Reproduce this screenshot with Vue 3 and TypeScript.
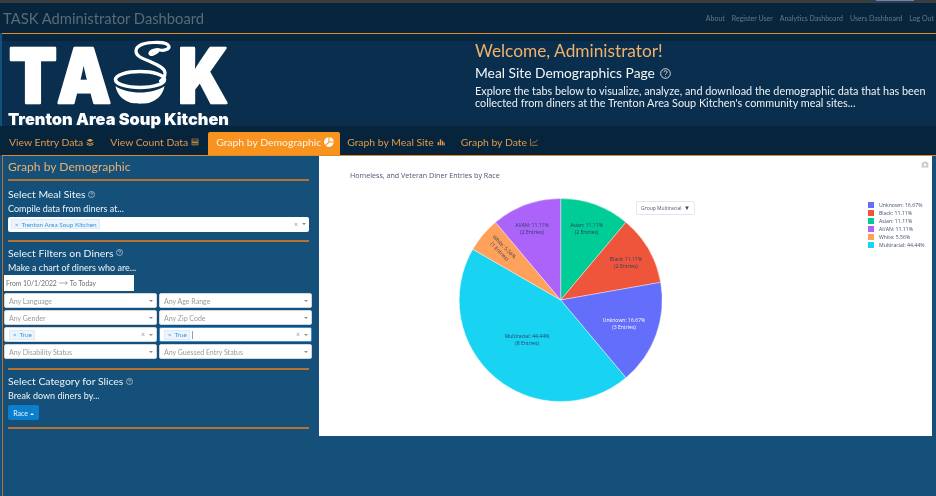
<script setup lang="ts">
type Slice = {
	name: string
	pct: number
	entries: number
	color: string
	x: number
	y: number
	light?: boolean
	rotate?: number
}

const cx = 241.7
const cy = 144
const r = 101.5

const slices: Slice[] = [
	{ name: 'Asian', pct: 11.11, entries: 2, color: '#00cc96', x: 267.5, y: 71 },
	{ name: 'Black', pct: 11.11, entries: 2, color: '#ef553b', x: 307, y: 105 },
	{ name: 'Unknown', pct: 16.67, entries: 3, color: '#636efa', x: 305, y: 166, light: true },
	{ name: 'Multiracial', pct: 44.44, entries: 8, color: '#19d3f3', x: 208, y: 182 },
	{ name: 'White', pct: 5.56, entries: 1, color: '#ffa15a', x: 184, y: 92, rotate: 45 },
	{ name: 'AI/AN', pct: 11.11, entries: 2, color: '#ab63fa', x: 213, y: 71 },
]

const legendOrder = ['Unknown', 'Black', 'Asian', 'AI/AN', 'White', 'Multiracial'].map(
	(name) => slices.find((s) => s.name === name) as Slice,
)

function point(turn: number) {
	const a = turn * Math.PI * 2
	return `${(cx + Math.sin(a) * r).toFixed(2)} ${(cy - Math.cos(a) * r).toFixed(2)}`
}

let sum = 0
const wedges = slices.map((s) => {
	const from = sum
	sum += s.pct / 100
	const big = s.pct > 50 ? 1 : 0
	return {
		...s,
		d: `M${cx} ${cy}L${point(from)}A${r} ${r} 0 ${big} 1 ${point(sum)}Z`,
	}
})

const filters = [
	{ label: 'Any Language' },
	{ label: 'Any Age Range' },
	{ label: 'Any Gender' },
	{ label: 'Any Zip Code' },
	{ tag: 'True' },
	{ tag: 'True', focused: true },
	{ label: 'Any Disability Status' },
	{ label: 'Any Guessed Entry Status' },
]
</script>

<template>
	<div class="page">
		<div class="browser-strip"><span class="strip-chip"></span></div>

		<nav class="navbar">
			<span class="brand">TASK Administrator Dashboard</span>
			<div class="nav-links">
				<a>About</a>
				<a>Register User</a>
				<a>Analytics Dashboard</a>
				<a>Users Dashboard</a>
				<a>Log Out</a>
			</div>
		</nav>

		<header class="hero">
			<svg class="logo" viewBox="0 0 236 85" width="236" height="85" role="img" aria-label="TASK logo">
				<g fill="#fff" stroke="#fff" stroke-width="2.5" stroke-linejoin="round" font-family="Inter, 'Liberation Sans', sans-serif" font-weight="900" font-size="76">
					<text x="9" y="61" textLength="48" lengthAdjust="spacingAndGlyphs">T</text>
					<text x="57" y="61" textLength="54" lengthAdjust="spacingAndGlyphs">A</text>
					<text x="178" y="61" textLength="50" lengthAdjust="spacingAndGlyphs">K</text>
				</g>
				<path d="M157.500 9.500c-3 2.500-7 4-7.500 2 0-3 7-4.500 10-3.500 4 1 9.500-1 9-3.500C168 1 160 0 153 .5 143 1 136 4 136 9c0 6 8 8 15 11 7 3 14 6 14 11 0 3-2 6-4.500 8" fill="none" stroke="#fff" stroke-width="3.200" stroke-linecap="round" stroke-linejoin="round" />
				<ellipse cx="140" cy="37.500" rx="24.500" ry="8" fill="none" stroke="#fff" stroke-width="3.600" />
				<path d="M115.500 44c5 4 15 6.500 24.500 6.500s19.500-2.500 24.500-6.500c-1.500 9-8 14.500-14.500 16.500-2.500 1.500-17.500 1.500-20 0-6.500-2-13-7.500-14.500-16.500Z" fill="#fff" />
				<text x="8" y="83" fill="#fff" font-family="Inter, 'Liberation Sans', sans-serif" font-weight="900" font-size="16.500" textLength="221" lengthAdjust="spacingAndGlyphs">Trenton Area Soup Kitchen</text>
			</svg>
			<div class="hero-copy">
				<h1>Welcome, Administrator!</h1>
				<h2>
					Meal Site Demographics Page
					<svg class="help help-lg" viewBox="0 0 16 16"><circle cx="8" cy="8" r="7" /><path d="M5.800 6.200c0-3 4.500-3 4.500-.2 0 2-2.300 1.800-2.300 3.700" /><circle class="dot" cx="8" cy="12" r=".6" /></svg>
				</h2>
				<p>Explore the tabs below to visualize, analyze, and download the demographic data that has been collected from diners at the Trenton Area Soup Kitchen's community meal sites...</p>
			</div>
		</header>

		<div class="tabs">
			<a class="tab">
				View Entry Data
				<svg class="tab-icon" viewBox="0 0 12 12"><path d="M1 3.500 6 1l5 2.500L6 6Z" /><path d="M1 6l5 2.500L11 6v1.500L6 10 1 7.500Z" /><path d="M1 8.500 6 11l5-2.500V10l-5 2-5-2Z" /></svg>
			</a>
			<a class="tab">
				View Count Data
				<svg class="tab-icon" viewBox="0 0 12 12"><path fill-rule="evenodd" d="M1 1h10v10H1Zm1 1v2h8V2Zm0 3v1.500h2V5Zm3 0v1.500h2V5Zm3 0v1.500h2V5ZM2 7.500V10h2V7.500Zm3 0V10h2V7.500Zm3 0V10h2V7.500Z" /></svg>
			</a>
			<a class="tab active">
				Graph by Demographic
				<svg class="tab-icon pie-icon" viewBox="0 0 12 12"><path d="M5.400.300v5.500l-4 3.900A5.700 5.700 0 0 1 5.400.300Z" /><path d="M6.600.300a5.700 5.700 0 0 1 5.100 5.100H6.600Z" /><path d="M6.500 6.600h5.200a5.700 5.700 0 0 1-9.400 3.900Z" /></svg>
			</a>
			<a class="tab">
				Graph by Meal Site
				<svg class="tab-icon" viewBox="0 0 12 12"><rect x="1" y="6" width="2.200" height="5" /><rect x="4.200" y="2" width="2.200" height="9" /><rect x="7.400" y="4.500" width="2" height="6.500" /><rect x="10" y="7" width="1.600" height="4" /></svg>
			</a>
			<a class="tab">
				Graph by Date
				<svg class="tab-icon" viewBox="0 0 12 12"><path class="line-icon" d="M.7 1v10h10.800M2.500 8.500l3-3 2 1.500 3.500-4.500" /></svg>
			</a>
		</div>

		<main class="content">
			<aside class="sidebar">
				<h3>Graph by Demographic</h3>
				<hr />
				<h4>
					Select Meal Sites
					<svg class="help" viewBox="0 0 16 16"><circle cx="8" cy="8" r="7" /><path d="M5.800 6.200c0-3 4.500-3 4.500-.2 0 2-2.300 1.800-2.300 3.700" /><circle class="dot" cx="8" cy="12" r=".6" /></svg>
				</h4>
				<p class="hint">Compile data from diners at...</p>
				<div class="select wide">
					<span class="tag"><b>×</b>Trenton Area Soup Kitchen</span>
					<span class="controls"><i>×</i><em></em></span>
				</div>
				<hr class="after-select" />
				<h4>
					Select Filters on Diners
					<svg class="help" viewBox="0 0 16 16"><circle cx="8" cy="8" r="7" /><path d="M5.800 6.200c0-3 4.500-3 4.500-.2 0 2-2.300 1.800-2.300 3.700" /><circle class="dot" cx="8" cy="12" r=".6" /></svg>
				</h4>
				<p class="hint">Make a chart of diners who are...</p>
				<div class="date-range">
					From 10/1/2022
					<svg viewBox="0 0 12 6" width="9" height="6"><path d="M0 3h11M8.500 1 11 3 8.500 5" /></svg>
					To Today
				</div>
				<div class="filter-grid">
					<div v-for="(f, i) in filters" :key="i" class="select" :class="{ tall: f.tag, focused: f.focused }">
						<span v-if="f.label" class="placeholder">{{ f.label }}</span>
						<span v-if="f.tag" class="tag"><b>×</b>{{ f.tag }}</span>
						<span v-if="f.focused" class="caret"></span>
						<span class="controls"><i v-if="f.tag">×</i><em></em></span>
					</div>
				</div>
				<hr class="after-grid" />
				<h4>
					Select Category for Slices
					<svg class="help" viewBox="0 0 16 16"><circle cx="8" cy="8" r="7" /><path d="M5.800 6.200c0-3 4.500-3 4.500-.2 0 2-2.300 1.800-2.300 3.700" /><circle class="dot" cx="8" cy="12" r=".6" /></svg>
				</h4>
				<p class="hint">Break down diners by...</p>
				<button type="button" class="race-btn">Race <span class="up"></span></button>
				<hr class="after-btn" />
			</aside>

			<section class="chart">
				<svg class="camera" viewBox="0 0 12 10" width="8" height="7"><path d="M1 2h2.500l1-1.500h3l1 1.500H11v7.500H1Z" /><circle cx="6" cy="5.500" r="2" fill="#fff" /></svg>
				<div class="group-select">Group Multiracial<span>▼</span></div>
				<svg class="plot" viewBox="0 0 613 280" width="613" height="280">
					<text x="31" y="22" class="title">Homeless, and Veteran Diner Entries by Race</text>
					<path v-for="w in wedges" :key="w.name" :d="w.d" :fill="w.color" stroke="#fff" stroke-width=".4" />
					<text
						v-for="w in wedges"
						:key="w.name + '-label'"
						class="pie-label"
						:class="{ light: w.light }"
						text-anchor="middle"
						:transform="`translate(${w.x} ${w.y}) rotate(${w.rotate ?? 0})`"
					>
						<tspan x="0" y="0">{{ w.name }}: {{ w.pct }}%</tspan>
						<tspan x="0" y="6.700">({{ w.entries }} Entries)</tspan>
					</text>
					<g v-for="(s, i) in legendOrder" :key="s.name + '-legend'" :transform="`translate(549 ${49 + i * 8})`">
						<rect x="0" y="-3" width="6" height="6" :fill="s.color" />
						<text x="11" y="2" class="legend">{{ s.name }}: {{ s.pct }}%</text>
					</g>
				</svg>
			</section>
		</main>
	</div>
</template>

<style>
html,
body {
	margin: 0;
	background: #14507a;
}
</style>

<style scoped>
.page {
	width: 936px;
	height: 496px;
	overflow: hidden;
	background: #14507a;
	font-family: Lato, 'Noto Sans', sans-serif;
	filter: blur(0.35px);
}

.browser-strip {
	display: flex;
	justify-content: flex-end;
	height: 3px;
	padding-right: 22px;
	background: #3a3d40;
}

.strip-chip {
	width: 38px;
	height: 1px;
	background: #5f86c9;
}

.navbar {
	display: flex;
	align-items: center;
	justify-content: space-between;
	height: 30px;
	padding: 0 2px 0 3px;
	background: #07263d;
}

.brand {
	font-size: 14.750px;
	color: #5a6b78;
}

.nav-links {
	display: flex;
	gap: 7px;
	font-size: 7px;
	color: #66798a;
}

.hero {
	display: flex;
	height: 84px;
	margin-left: 2px;
	padding-top: 8px;
	border-top: 1.5px solid #e08f30;
	background: linear-gradient(#07263d 7px, #0a2e4d 7px);
}

.logo {
	flex: none;
	margin-left: -2px;
	overflow: visible;
}

.hero-copy {
	margin: -2px 0 0 239px;
	width: 455px;
}

.hero-copy h1 {
	margin: 0;
	font-size: 17.300px;
	line-height: 22px;
	font-weight: 400;
	color: #f2b26a;
}

.hero-copy h2 {
	display: flex;
	align-items: center;
	gap: 5px;
	margin: 2px 0 0;
	font-size: 13.800px;
	line-height: 18px;
	font-weight: 400;
	color: #f3f6f8;
}

.hero-copy p {
	margin: 3px 0 0;
	font-size: 10.850px;
	line-height: 12px;
	color: #eef2f5;
}

.help {
	width: 7px;
	height: 7px;
	fill: none;
	stroke: #e8edf1;
	stroke-width: 1.300;
}

.help-lg {
	width: 11px;
	height: 11px;
}

.help .dot {
	fill: #e8edf1;
	stroke: none;
}

.tabs {
	display: flex;
	align-items: flex-end;
	height: 29px;
	background: #06243b;
}

.tab {
	display: flex;
	align-items: center;
	gap: 3px;
	height: 23px;
	padding: 0 8px 3px;
	box-sizing: border-box;
	font-size: 10.400px;
	color: #e29a4c;
	white-space: nowrap;
}

.tab:first-child {
	margin-left: 1px;
}

.tab.active {
	flex: none;
	width: 132px;
	margin-left: 1px;
	padding: 0 1px 3px 8px;
	border-radius: 2px 2px 0 0;
	background: #f7931e;
	color: #fff3e2;
}

.tab.active + .tab {
	margin-left: -1px;
}

.tab-icon {
	flex: none;
	width: 8px;
	height: 8px;
	fill: currentColor;
}

.pie-icon {
	width: 10px;
	height: 10px;
	fill: #fff;
}

.line-icon {
	fill: none;
	stroke: currentColor;
	stroke-width: 1;
}

.content {
	display: flex;
	margin-left: 2px;
	border-top: 1.5px solid #e08a27;
}

.sidebar {
	flex: none;
	width: 317px;
	height: 340px;
	box-sizing: border-box;
	padding: 3px 10px 0 5px;
	border-left: 1.5px solid #b8742e;
	color: #eef3f6;
}

.sidebar h3 {
	margin: 0;
	font-size: 12.100px;
	line-height: 15px;
	font-weight: 400;
	color: #eeb06c;
}

.sidebar hr {
	margin: 5px 0 6px;
	height: 2px;
	border: 0;
	background: #b8742e;
}

.sidebar hr.after-select {
	margin: 8px 0 4px;
}

.sidebar hr.after-grid {
	margin: 9px 0 4px;
}

.sidebar hr.after-btn {
	margin-top: 7px;
}

.sidebar h4 {
	display: flex;
	align-items: center;
	gap: 3px;
	margin: 0;
	font-size: 10.400px;
	line-height: 14px;
	font-weight: 400;
}

.hint {
	margin: 1px 0 0;
	font-size: 9px;
	line-height: 14px;
}

.select {
	position: relative;
	display: flex;
	align-items: center;
	height: 15px;
	box-sizing: border-box;
	padding-left: 4px;
	border: 1px solid #cfd8e0;
	border-radius: 2px;
	background: #fff;
	font-size: 7px;
}

.select.wide {
	margin-top: 1px;
	height: 14.500px;
	border: 0;
	padding-left: 3px;
}

.placeholder {
	color: #9a9a9a;
}

.tag {
	display: inline-flex;
	align-items: center;
	gap: 3px;
	height: 10px;
	padding: 0 2px 0 3px;
	border: 1px solid #dcebf8;
	background: #ecf5fd;
	color: #3d95d8;
	font-size: 6.400px;
	box-sizing: border-box;
}

.tag b {
	font-weight: 400;
	font-size: 6px;
}

.caret {
	width: 1.500px;
	height: 8px;
	margin-left: 2px;
	background: #9d9d9d;
}

.controls {
	display: flex;
	align-items: center;
	gap: 4px;
	margin-left: auto;
	padding-right: 3px;
	color: #999;
}

.controls i {
	font-style: normal;
	font-size: 7px;
	line-height: 1;
}

.controls em {
	width: 0;
	height: 0;
	border-left: 2px solid transparent;
	border-right: 2px solid transparent;
	border-top: 2px solid #8e8e8e;
}

.date-range {
	display: flex;
	align-items: center;
	gap: 2px;
	width: 130px;
	height: 16px;
	box-sizing: border-box;
	margin: 0.500px 0 2px -4px;
	padding-left: 2px;
	background: #fff;
	font-size: 6.800px;
	color: #6f6f6f;
}

.date-range svg {
	fill: none;
	stroke: #777;
	stroke-width: .8;
}

.filter-grid {
	display: grid;
	grid-template-columns: 153px 153px;
	gap: 2px;
	margin-left: -4px;
	width: 308px;
}

.select.tall {
	border-color: #cfd8e0;
}

.select.focused {
	border-color: #3a8fd6;
}

.race-btn {
	display: block;
	width: 31px;
	height: 15px;
	margin-top: 2px;
	padding: 0;
	border: 0;
	border-radius: 2px;
	background: #0b7fcb;
	color: #eaf5fc;
	font-family: inherit;
	font-size: 7px;
}

.up {
	display: inline-block;
	width: 0;
	height: 0;
	vertical-align: 1px;
	border-left: 2px solid transparent;
	border-right: 2px solid transparent;
	border-bottom: 2px solid #eaf5fc;
}

.chart {
	position: relative;
	flex: none;
	align-self: flex-start;
	width: 613px;
	height: 280px;
	background: #fff;
}

.plot {
	display: block;
	font-family: 'Open Sans', 'Noto Sans', sans-serif;
}

.camera {
	position: absolute;
	top: 5px;
	right: 3px;
	fill: #c6cbd0;
}

.group-select {
	position: absolute;
	top: 45px;
	left: 317px;
	display: flex;
	align-items: center;
	justify-content: space-between;
	width: 59px;
	height: 14px;
	box-sizing: border-box;
	padding: 0 4px;
	border: 1px solid #e3e7ec;
	border-radius: 2px;
	background: #fff;
	font-family: 'Open Sans', sans-serif;
	font-size: 5px;
	color: #4b5770;
	white-space: nowrap;
}

.group-select span {
	font-size: 6px;
	color: #3a4660;
}

.title {
	font-size: 7.150px;
	fill: #4a5670;
}

.pie-label {
	font-size: 5.100px;
	fill: #2a3f5f;
}

.pie-label.light {
	fill: #fff;
}

.legend {
	font-size: 5.200px;
	fill: #42506c;
}
</style>
